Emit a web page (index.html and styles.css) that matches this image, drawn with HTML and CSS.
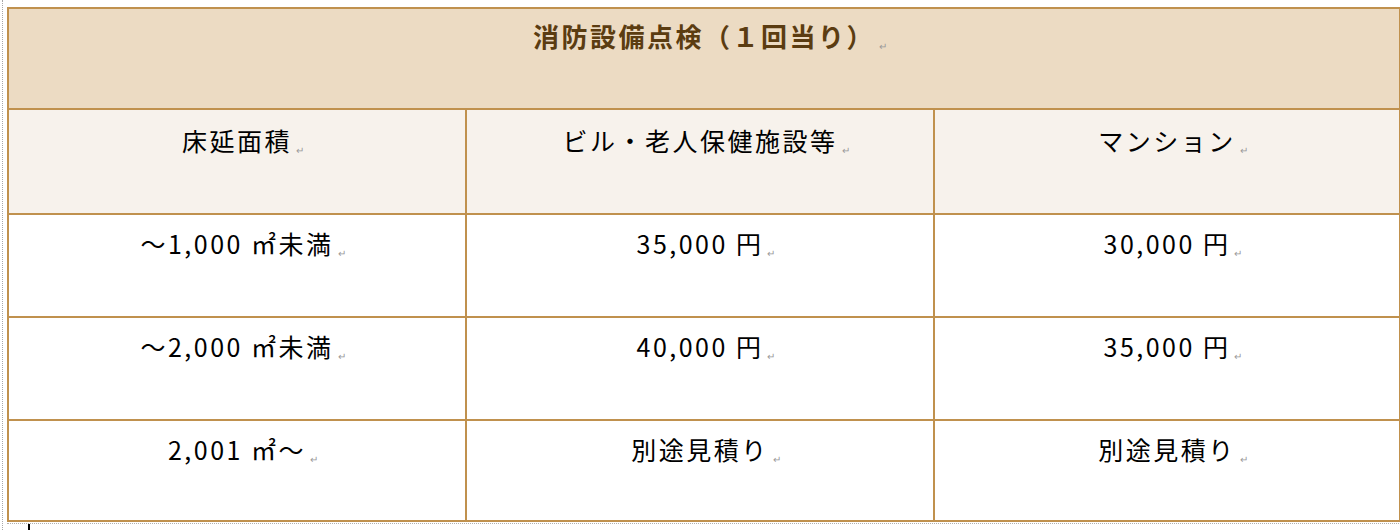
FILE: index.html
```html
<!DOCTYPE html>
<html lang="ja">
<head>
<meta charset="utf-8">
<link rel="stylesheet" href="styles.css">
</head>
<body>
<div class="page">
  <table class="price">
    <colgroup>
      <col class="c1"><col class="c2"><col class="c3">
    </colgroup>
    <tr class="r-title">
      <td colspan="3" class="title">消防設備点検（１回当り）<span class="pm">↵</span></td>
    </tr>
    <tr class="r-head">
      <td>床延面積<span class="pm">↵</span></td>
      <td>ビル・老人保健施設等<span class="pm">↵</span></td>
      <td>マンション<span class="pm">↵</span></td>
    </tr>
    <tr class="r-data">
      <td>～1,000 ㎡未満<span class="pm">↵</span></td>
      <td>35,000 円<span class="pm">↵</span></td>
      <td>30,000 円<span class="pm">↵</span></td>
    </tr>
    <tr class="r-data">
      <td>～2,000 ㎡未満<span class="pm">↵</span></td>
      <td>40,000 円<span class="pm">↵</span></td>
      <td>35,000 円<span class="pm">↵</span></td>
    </tr>
    <tr class="r-data r-last">
      <td>2,001 ㎡～<span class="pm">↵</span></td>
      <td>別途見積り<span class="pm">↵</span></td>
      <td>別途見積り<span class="pm">↵</span></td>
    </tr>
  </table>
  <div class="below">
    <span class="cursor"></span>
  </div>
</div>
</body>
</html>
```

FILE: styles.css
```css
html, body {
  margin: 0;
  padding: 0;
  background: #ffffff;
}

.page {
  width: 1400px;
  height: 530px;
  box-sizing: border-box;
  padding: 7px 3px 0 4px;
  border-left: 1px dotted #a8a8a8;
  margin-left: 2px;
  overflow: hidden;
  font-family: "Noto Sans CJK JP", "Noto Sans", sans-serif;
}

.price {
  border-collapse: collapse;
  table-layout: fixed;
  width: 1392px;
}

.c1 { width: 458px; }
.c2 { width: 468px; }
.c3 { width: 466px; }

.price td {
  border: 2px solid #c0914e;
  text-align: center;
  vertical-align: top;
  font-size: 25px;
  line-height: 30px;
  letter-spacing: 2.5px;
  font-weight: 400;
  color: #000000;
  padding: 0;
  white-space: nowrap;
  box-sizing: border-box;
}

.r-title td {
  height: 101px;
  background: #ecdbc3;
  color: #5b3c11;
  font-weight: 700;
  font-size: 26px;
  padding-top: 12px;
  letter-spacing: 2.5px;
}

.r-head td {
  height: 105px;
  background: #f7f2ec;
  padding-top: 15px;
}

.r-data td {
  height: 103px;
  background: #ffffff;
  padding-top: 13px;
}

.r-last td {
  height: 101px;
}

.pm {
  display: inline-block;
  font-size: 10px;
  line-height: 10px;
  letter-spacing: 0;
  color: #9a9a9a;
  font-weight: 400;
  margin-left: 3px;
  margin-right: -13px;
  width: 10px;
  vertical-align: -3px;
}

.below {
  height: 8px;
  border-top: 1px dotted #b0b0b0;
  margin-top: 1px;
  position: relative;
}

.cursor {
  position: absolute;
  left: 21px;
  top: 0;
  width: 2px;
  height: 9px;
  background: #000000;
}
```
